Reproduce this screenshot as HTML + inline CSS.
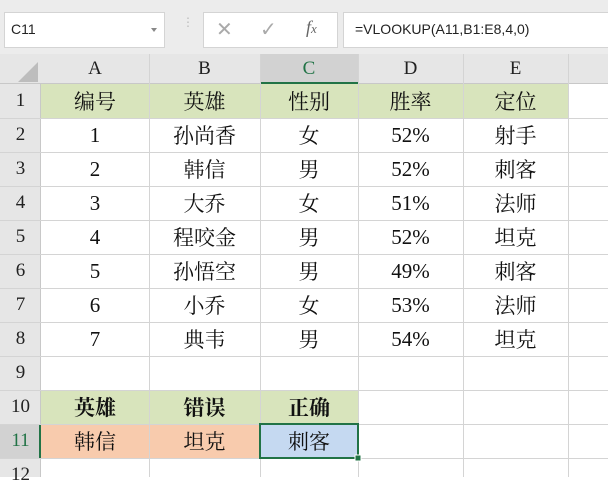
<!DOCTYPE html><html><head><meta charset="utf-8"><style>
body{margin:0;width:608px;height:477px;overflow:hidden;background:#fff;position:relative;font-family:"Liberation Serif","Noto Serif CJK SC",serif}
.a{position:absolute;box-sizing:border-box}
.top{left:0;top:0;width:608px;height:54px;background:#ececec}
.box{background:#fff;border:1px solid #d4d4d4}
.t{font-family:"Liberation Sans",sans-serif;font-size:14px;color:#222}
.c{position:absolute;display:flex;align-items:center;justify-content:center;font-size:21px;color:#111}
.h{position:absolute;display:flex;align-items:center;justify-content:center;font-size:19px;color:#222;background:#e6e6e6}
</style></head><body>
<div class="a top"></div>
<div class="a box" style="left:4px;top:12px;width:161px;height:36px"></div>
<div class="a t" style="left:11px;top:21px">C11</div>
<div class="a" style="left:151px;top:28px;width:0;height:0;border-left:3px solid transparent;border-right:3px solid transparent;border-top:4px solid #888"></div>
<div class="a" style="left:182px;top:18px;color:#bbb;font-size:12px;line-height:8px;font-family:'Liberation Sans'">⋮</div>
<div class="a box" style="left:203px;top:12px;width:135px;height:36px"></div>
<div class="a" style="left:216px;top:17px;font-size:20px;color:#aaa;font-family:'Liberation Sans'">✕</div>
<div class="a" style="left:260px;top:17px;font-size:20px;color:#aaa;font-family:'DejaVu Sans'">✓</div>
<div class="a" style="left:306px;top:17px;font-size:18px;color:#666;font-style:italic">f<span style="font-size:13px">x</span></div>
<div class="a box" style="left:343px;top:12px;width:270px;height:36px"></div>
<div class="a t" style="left:355px;top:21px">=VLOOKUP(A11,B1:E8,4,0)</div>

<div class="a" style="left:0;top:54px;width:608px;height:30px;background:#e6e6e6;border-bottom:1px solid #c8c8c8"></div>
<div class="a" style="left:18px;top:62px;width:0;height:0;border-left:20px solid transparent;border-bottom:20px solid #bdbdbd"></div>
<div class="a" style="left:260px;top:54px;width:98px;height:30px;background:#d2d2d2;border-bottom:2px solid #217346"></div>
<div class="a" style="left:0;top:84px;width:41px;height:393px;background:#e6e6e6;border-right:1px solid #c8c8c8"></div>
<div class="a" style="left:0;top:424px;width:41px;height:34px;background:#d2d2d2;border-right:2px solid #217346"></div>

<div class="a" style="left:41px;top:84px;width:527px;height:34px;background:#d8e4bc"></div>
<div class="a" style="left:41px;top:390px;width:317px;height:34px;background:#d8e4bc"></div>
<div class="a" style="left:41px;top:424px;width:219px;height:34px;background:#f8cbad"></div>
<div class="a" style="left:260px;top:424px;width:98px;height:34px;background:#c5d9f1"></div>

<svg class="a" style="left:0;top:0" width="608" height="477">
<g stroke="#d4d4d4" stroke-width="1">
<line x1="149.5" y1="54" x2="149.5" y2="477"/><line x1="260.5" y1="54" x2="260.5" y2="477"/><line x1="358.5" y1="54" x2="358.5" y2="477"/><line x1="463.5" y1="54" x2="463.5" y2="477"/><line x1="568.5" y1="54" x2="568.5" y2="477"/>
<line x1="0" y1="118.5" x2="608" y2="118.5"/><line x1="0" y1="152.5" x2="608" y2="152.5"/><line x1="0" y1="186.5" x2="608" y2="186.5"/><line x1="0" y1="220.5" x2="608" y2="220.5"/><line x1="0" y1="254.5" x2="608" y2="254.5"/><line x1="0" y1="288.5" x2="608" y2="288.5"/><line x1="0" y1="322.5" x2="608" y2="322.5"/><line x1="0" y1="356.5" x2="608" y2="356.5"/><line x1="0" y1="390.5" x2="608" y2="390.5"/><line x1="0" y1="424.5" x2="608" y2="424.5"/><line x1="0" y1="458.5" x2="608" y2="458.5"/>
</g>
<rect x="260" y="424" width="98" height="34" fill="none" stroke="#217346" stroke-width="2"/>
<rect x="355" y="455" width="6" height="6" fill="#217346" stroke="#fff" stroke-width="1"/>
</svg>

<div class="h" style="left:41px;top:54px;width:108px;height:30px;background:none">A</div>
<div class="h" style="left:149px;top:54px;width:111px;height:30px;background:none">B</div>
<div class="h" style="left:260px;top:54px;width:98px;height:30px;background:none;color:#217346">C</div>
<div class="h" style="left:358px;top:54px;width:105px;height:30px;background:none">D</div>
<div class="h" style="left:463px;top:54px;width:105px;height:30px;background:none">E</div>

<div id="rows"></div>
<script>
var d=[["编号","英雄","性别","胜率","定位"],["1","孙尚香","女","52%","射手"],["2","韩信","男","52%","刺客"],["3","大乔","女","51%","法师"],["4","程咬金","男","52%","坦克"],["5","孙悟空","男","49%","刺客"],["6","小乔","女","53%","法师"],["7","典韦","男","54%","坦克"],[],["英雄","错误","正确"],["韩信","坦克","刺客"],[]];
var cx=[41,149,260,358,463,568],h="";
for(var r=0;r<12;r++){var y=84+34*r;
h+='<div class="h" style="left:0;top:'+y+'px;width:41px;height:34px;background:none;'+(r==10?'color:#217346':'')+'">'+(r+1)+'</div>';
var row=d[r];for(var c=0;c<row.length;c++){h+='<div class="c" style="left:'+cx[c]+'px;top:'+y+'px;width:'+(cx[c+1]-cx[c])+'px;height:34px;'+(r==9?'font-weight:bold':'')+'">'+row[c]+'</div>';}}
document.getElementById('rows').innerHTML=h;
</script>
</body></html>
